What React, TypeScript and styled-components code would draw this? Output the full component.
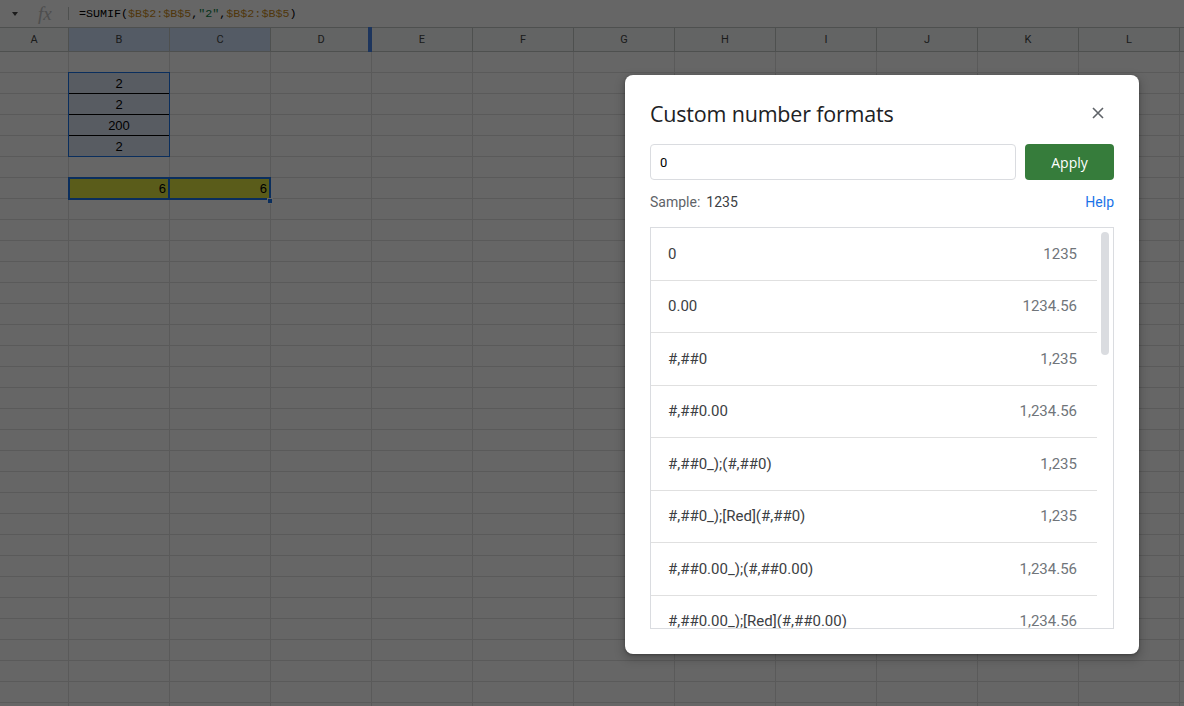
import React from "react";
import styled, { createGlobalStyle } from "styled-components";

const Global = createGlobalStyle`
  html, body { margin: 0; padding: 0; background: #fff; overflow: hidden; }
  * { box-sizing: border-box; }
`;

const COLS = ["A", "B", "C", "D", "E", "F", "G", "H", "I", "J", "K", "L", ""];
const colWidth = (i: number) => (i === 0 ? 69 : 101);
const ROW_COUNT = 32;

const Page = styled.div`
  position: relative;
  width: 1184px;
  height: 706px;
  overflow: hidden;
  font-family: "Liberation Sans", Arial, sans-serif;
`;

const FormulaBar = styled.div`
  display: flex;
  align-items: center;
  height: 28px;
  border-bottom: 1px solid #c4c7c5;
  background: #fff;
`;

const NameBoxArrow = styled.div`
  width: 36px;
  display: flex;
  justify-content: center;
  & > span {
    width: 0;
    height: 0;
    margin-left: -6px;
    border-left: 3.5px solid transparent;
    border-right: 3.5px solid transparent;
    border-top: 4px solid #444;
  }
`;

const Fx = styled.div`
  width: 32px;
  font-family: "Liberation Serif", "Times New Roman", serif;
  font-style: italic;
  font-size: 19px;
  color: #c2c2c2;
  padding-left: 2px;
`;

const Divider = styled.div`
  width: 1px;
  height: 13px;
  background: #c4c7c5;
  margin-right: 10px;
`;

const Formula = styled.div`
  font-family: "Liberation Mono", "Courier New", monospace;
  font-size: 11.7px;
  color: #000;
  white-space: pre;
`;

const Ref = styled.span`
  color: #c98a1a;
`;
const Str = styled.span`
  color: #0b8043;
`;

const Row = styled.div`
  display: flex;
  height: 21px;
`;

const HeaderRow = styled.div`
  display: flex;
  height: 24px;
  background: #f8f9fa;
  border-bottom: 1px solid #c4c7c5;
`;

const HeaderCell = styled.div<{ $w: number; $sel?: boolean }>`
  position: relative;
  flex: 0 0 ${(p) => p.$w}px;
  display: flex;
  align-items: center;
  justify-content: center;
  font-family: Roboto, "Liberation Sans", sans-serif;
  font-size: 11px;
  color: #444746;
  border-right: 1px solid #c4c7c5;
  background: ${(p) => (p.$sel ? "#d3e3fd" : "transparent")};
`;

const FreezeBar = styled.div`
  position: absolute;
  right: -1px;
  top: -1px;
  bottom: -1px;
  width: 4px;
  background: #4a86e8;
`;

const Cell = styled.div<{ $w: number; $bg?: string; $align?: string; $bb?: string }>`
  flex: 0 0 ${(p) => p.$w}px;
  border-right: 1px solid #e1e1e1;
  border-bottom: 1px solid ${(p) => p.$bb || "#e1e1e1"};
  background: ${(p) => p.$bg || "#fff"};
  font-size: 13px;
  color: #000;
  display: flex;
  align-items: center;
  justify-content: ${(p) => (p.$align === "right" ? "flex-end" : "center")};
  padding: 0 3px;
  line-height: 1;
`;

const Grid = styled.div`
  position: relative;
`;

const SelBox = styled.div<{ $t: number; $l: number; $w: number; $h: number; $bw: number }>`
  position: absolute;
  top: ${(p) => p.$t}px;
  left: ${(p) => p.$l}px;
  width: ${(p) => p.$w}px;
  height: ${(p) => p.$h}px;
  border: ${(p) => p.$bw}px solid #1a73e8;
  pointer-events: none;
`;

const Handle = styled.div`
  position: absolute;
  top: 146px;
  left: 267px;
  width: 6px;
  height: 6px;
  background: #1a73e8;
  border: 1px solid #fff;
`;

const Scrim = styled.div`
  position: absolute;
  inset: 0;
  background: rgba(0, 0, 0, 0.6);
`;

const Dialog = styled.div`
  position: absolute;
  left: 625px;
  top: 75px;
  width: 514px;
  height: 579px;
  background: #fff;
  border-radius: 8px;
  box-shadow: 0 4px 8px 3px rgba(0, 0, 0, 0.15), 0 1px 3px rgba(0, 0, 0, 0.3);
  padding: 24px 25px 25px 25px;
  display: flex;
  flex-direction: column;
  font-family: Roboto, "Liberation Sans", sans-serif;
`;

const TitleRow = styled.div`
  display: flex;
  align-items: center;
  justify-content: space-between;
  height: 28px;
`;

const Title = styled.div`
  font-family: "Open Sans", Roboto, sans-serif;
  font-size: 21.5px;
  color: #202124;
  letter-spacing: -0.2px;
`;

const CloseBtn = styled.div`
  width: 24px;
  height: 24px;
  display: flex;
  align-items: center;
  justify-content: center;
  margin-right: 4px;
`;

const InputRow = styled.div`
  display: flex;
  gap: 9px;
  margin-top: 17px;
  height: 36px;
`;

const Input = styled.div`
  flex: 1;
  border: 1px solid #dadce0;
  border-radius: 4px;
  display: flex;
  align-items: center;
  padding-left: 9px;
  font-size: 13px;
  color: #000;
`;

const ApplyBtn = styled.div`
  flex: 0 0 89px;
  background: #367c3b;
  border-radius: 4px;
  color: #fff;
  font-family: "Open Sans", Roboto, sans-serif;
  font-weight: 500;
  font-size: 14px;
  display: flex;
  align-items: center;
  justify-content: center;
`;

const SampleRow = styled.div`
  display: flex;
  align-items: center;
  height: 20px;
  margin-top: 12px;
  font-size: 14px;
`;

const SampleLabel = styled.span`
  color: #5f6368;
  margin-right: 6px;
`;
const SampleValue = styled.span`
  color: #3c4043;
  flex: 1;
`;
const Help = styled.span`
  color: #1a73e8;
`;

const List = styled.div`
  margin-top: 15px;
  height: 402px;
  border: 1px solid #dadce0;
  display: flex;
  overflow: hidden;
`;

const Items = styled.div`
  flex: 1;
  overflow: hidden;
`;

const Item = styled.div`
  height: 52.5px;
  border-bottom: 1px solid #e0e0e0;
  display: flex;
  align-items: center;
  justify-content: space-between;
  padding: 0 20px 0 17px;
  font-size: 15px;
`;

const ItemFormat = styled.span`
  color: #3c4043;
`;
const ItemValue = styled.span`
  color: #70757a;
`;

const Track = styled.div`
  flex: 0 0 16px;
  padding: 4px 4px 0 4px;
`;

const Thumb = styled.div`
  width: 8px;
  height: 123px;
  border-radius: 4px;
  background: #dadce0;
`;

const formats: [string, string][] = [
  ["0", "1235"],
  ["0.00", "1234.56"],
  ["#,##0", "1,235"],
  ["#,##0.00", "1,234.56"],
  ["#,##0_);(#,##0)", "1,235"],
  ["#,##0_);[Red](#,##0)", "1,235"],
  ["#,##0.00_);(#,##0.00)", "1,234.56"],
  ["#,##0.00_);[Red](#,##0.00)", "1,234.56"],
];

type CellData = { v?: string; bg?: string; align?: string; bb?: string };
const cellData: Record<string, CellData> = {
  "1-1": { v: "2", bg: "#dce6f6", bb: "#000" },
  "2-1": { v: "2", bg: "#dce6f6", bb: "#000" },
  "3-1": { v: "200", bg: "#dce6f6", bb: "#000" },
  "4-1": { v: "2", bg: "#dce6f6" },
  "6-1": { v: "6", bg: "#e1e641", align: "right" },
  "6-2": { v: "6", bg: "#e1e641", align: "right" },
};

export default function App() {
  return (
    <Page>
      <Global />
      <FormulaBar>
        <NameBoxArrow>
          <span />
        </NameBoxArrow>
        <Fx>fx</Fx>
        <Divider />
        <Formula>
          =SUMIF(<Ref>$B$2:$B$5</Ref>,<Str>"2"</Str>,<Ref>$B$2:$B$5</Ref>)
        </Formula>
      </FormulaBar>
      <HeaderRow>
        {COLS.map((c, i) => (
          <HeaderCell key={i} $w={colWidth(i)} $sel={i === 1 || i === 2}>
            {c}
            {i === 3 && <FreezeBar />}
          </HeaderCell>
        ))}
      </HeaderRow>
      <Grid>
        {Array.from({ length: ROW_COUNT }).map((_, r) => (
          <Row key={r}>
            {COLS.map((c, i) => {
              const d = cellData[`${r}-${i}`] || {};
              return (
                <Cell key={i} $w={colWidth(i)} $bg={d.bg} $align={d.align} $bb={d.bb}>
                  {d.v}
                </Cell>
              );
            })}
          </Row>
        ))}
        <SelBox $t={20} $l={68} $w={102} $h={85} $bw={1} />
        <SelBox $t={125} $l={68} $w={102} $h={23} $bw={2} />
        <SelBox $t={125} $l={168} $w={103} $h={23} $bw={2} />
        <Handle />
      </Grid>
      <Scrim />
      <Dialog>
        <TitleRow>
          <Title>Custom number formats</Title>
          <CloseBtn>
            <svg width="12" height="12" viewBox="0 0 12 12">
              <path d="M1 1L11 11M11 1L1 11" stroke="#5f6368" strokeWidth="1.6" />
            </svg>
          </CloseBtn>
        </TitleRow>
        <InputRow>
          <Input>0</Input>
          <ApplyBtn>Apply</ApplyBtn>
        </InputRow>
        <SampleRow>
          <SampleLabel>Sample:</SampleLabel>
          <SampleValue>1235</SampleValue>
          <Help>Help</Help>
        </SampleRow>
        <List>
          <Items>
            {formats.map(([f, v]) => (
              <Item key={f}>
                <ItemFormat>{f}</ItemFormat>
                <ItemValue>{v}</ItemValue>
              </Item>
            ))}
          </Items>
          <Track>
            <Thumb />
          </Track>
        </List>
      </Dialog>
    </Page>
  );
}
